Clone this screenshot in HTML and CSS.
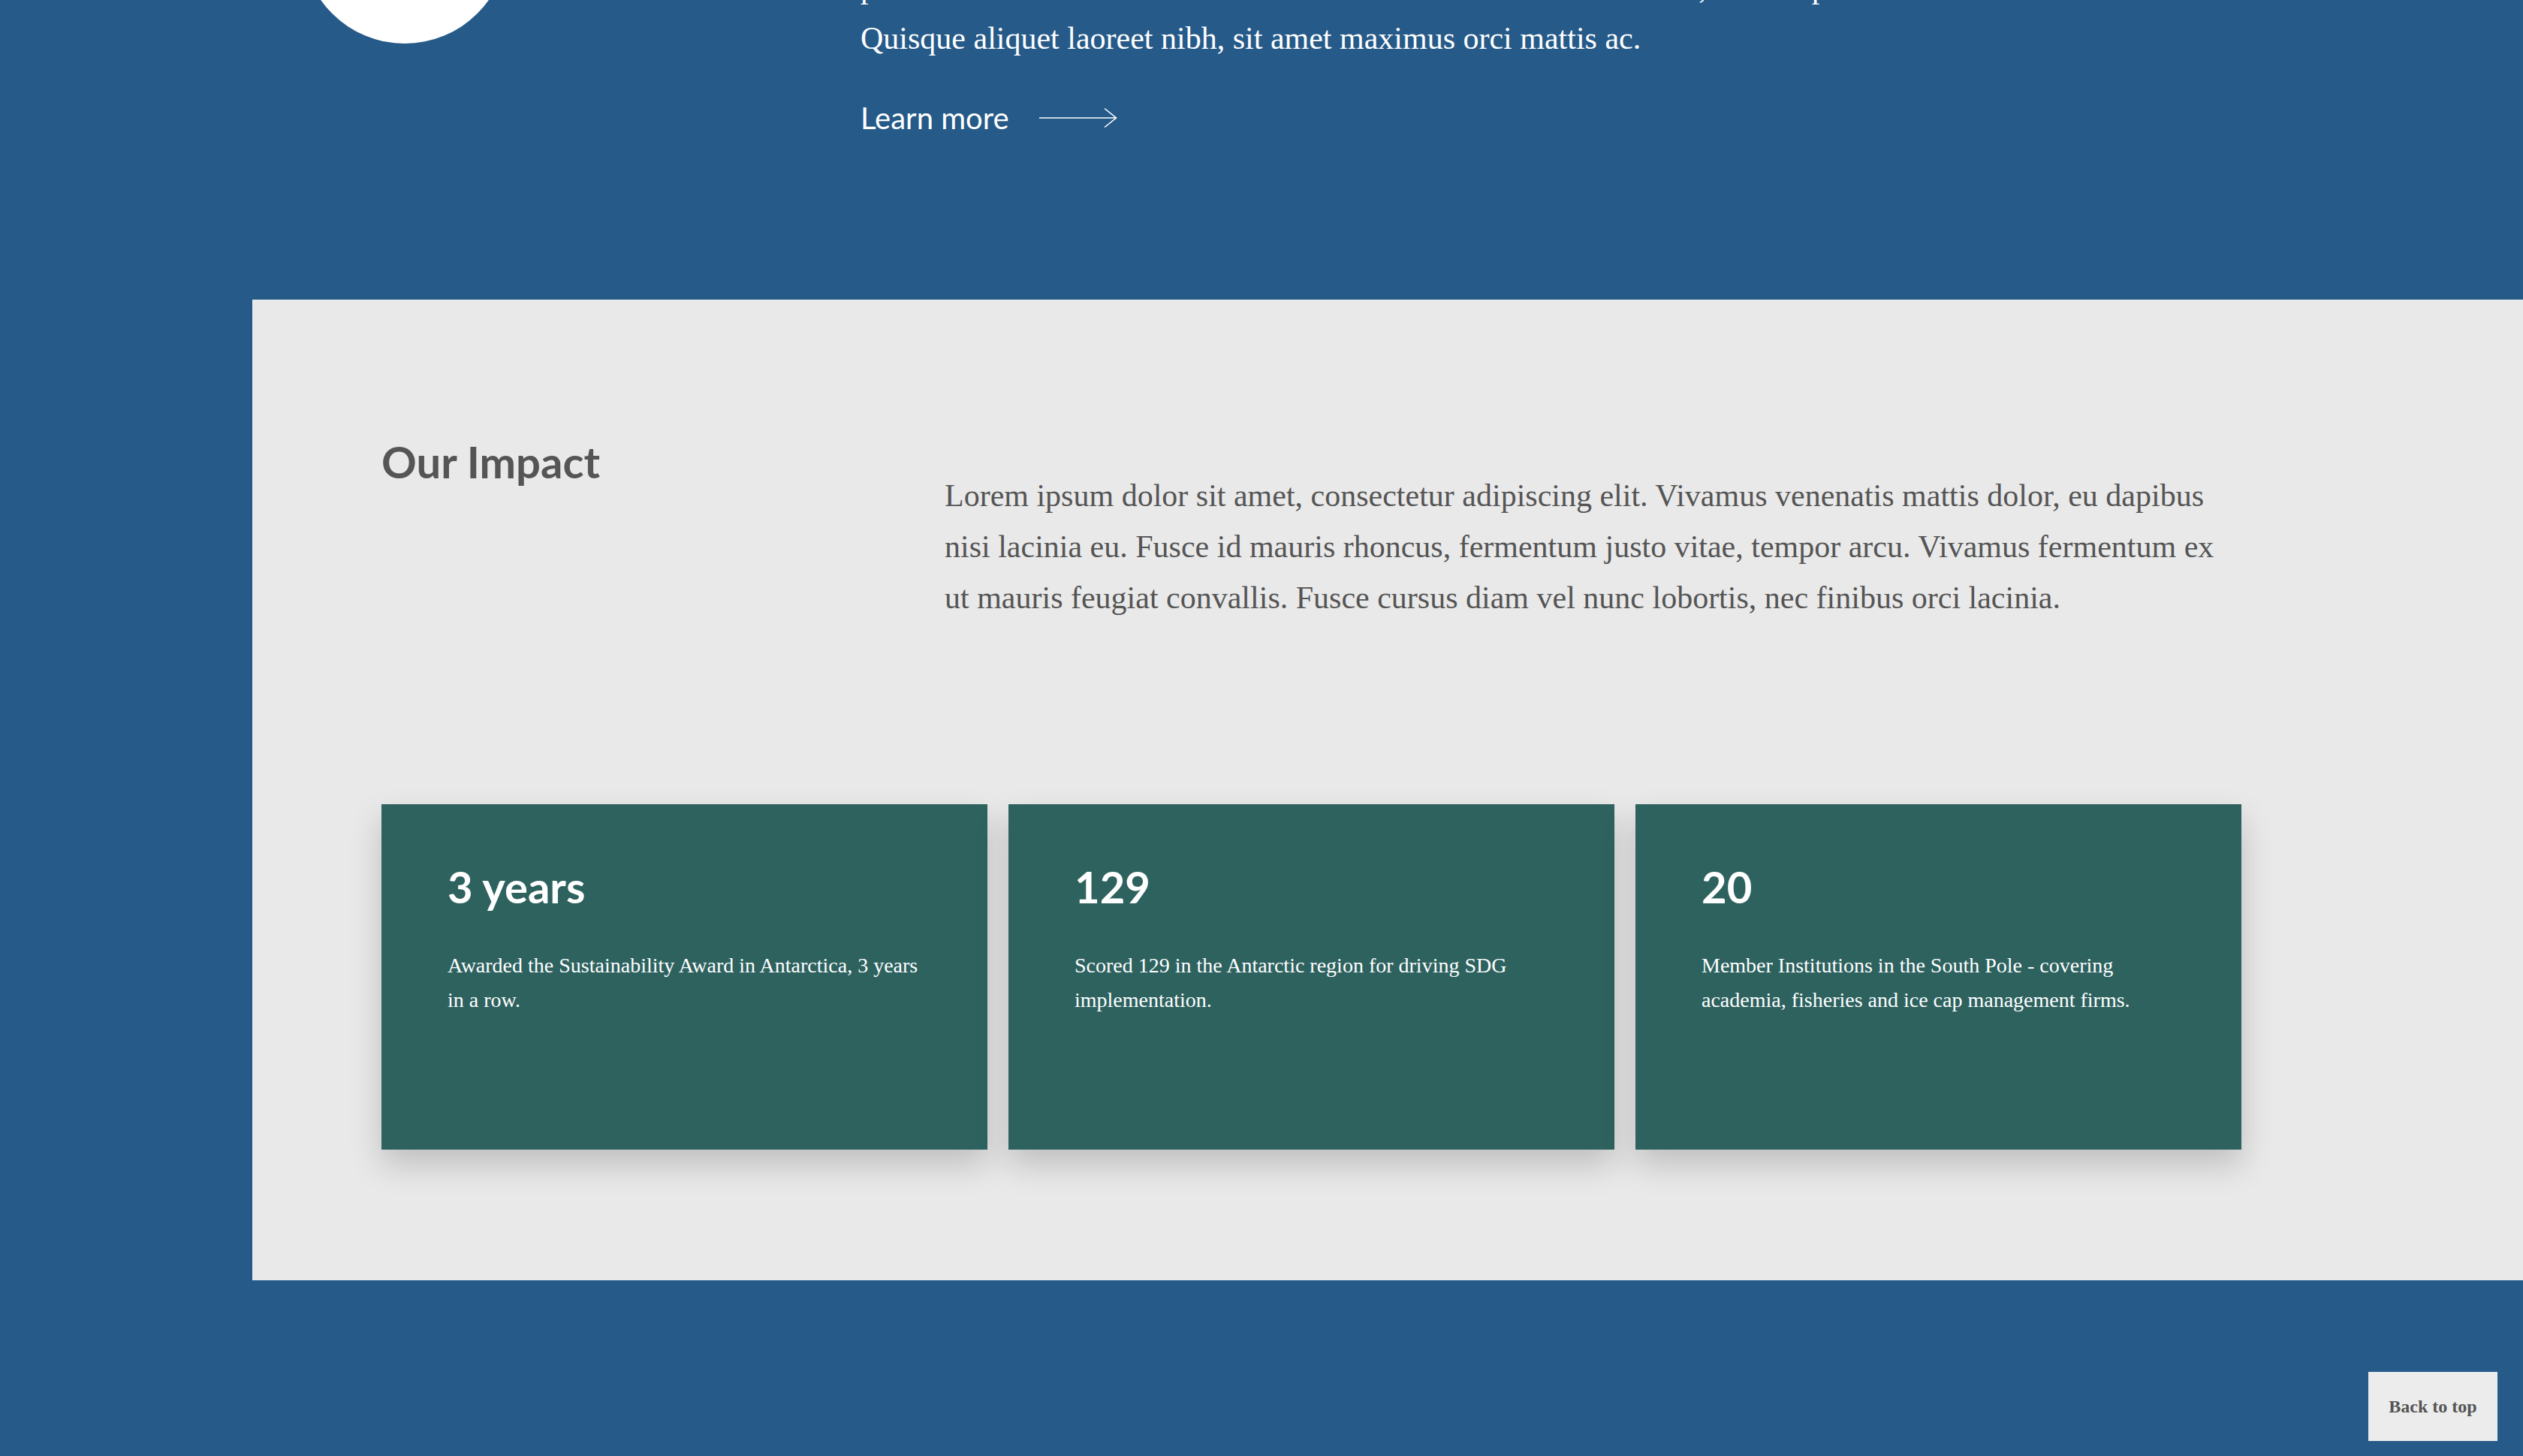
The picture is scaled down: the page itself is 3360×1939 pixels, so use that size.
FILE: index.html
```html
<!DOCTYPE html>
<html lang="en">
<head>
<meta charset="utf-8">
<title>Our Impact</title>
<link rel="stylesheet" href="styles.css">
</head>
<body>
<section class="hero">
  <div class="hero-circle"></div>
  <div class="hero-body">
    <p class="hero-text">pretium lacus. Nam libero ut erat sollicitudin dictum sit amet nunc, sed tempus<br>Quisque aliquet laoreet nibh, sit amet maximus orci mattis ac.</p>
    <a class="learn-more" href="#">
      <span>Learn more</span>
      <svg class="arrow" width="104" height="28" viewBox="0 0 104 28" aria-hidden="true">
        <line x1="0" y1="14" x2="102.5" y2="14" stroke="#fff" stroke-width="1.6"/>
        <polyline points="87,1.5 102.5,14 87,26.5" fill="none" stroke="#fff" stroke-width="1.6"/>
      </svg>
    </a>
  </div>
</section>

<section class="impact">
  <div class="impact-intro">
    <h2 class="impact-title">Our Impact</h2>
    <p class="impact-text">Lorem ipsum dolor sit amet, consectetur adipiscing elit. Vivamus venenatis mattis dolor, eu dapibus nisi lacinia eu. Fusce id mauris rhoncus, fermentum justo vitae, tempor arcu. Vivamus fermentum ex ut mauris feugiat convallis. Fusce cursus diam vel nunc lobortis, nec finibus orci lacinia.</p>
  </div>
  <div class="cards">
    <div class="card">
      <h3 class="card-title">3 years</h3>
      <p class="card-text">Awarded the Sustainability Award in Antarctica, 3 years in a row.</p>
    </div>
    <div class="card">
      <h3 class="card-title">129</h3>
      <p class="card-text">Scored 129 in the Antarctic region for driving SDG implementation.</p>
    </div>
    <div class="card">
      <h3 class="card-title">20</h3>
      <p class="card-text">Member Institutions in the South Pole - covering academia, fisheries and ice cap management firms.</p>
    </div>
  </div>
</section>

<a class="back-to-top" href="#">Back to top</a>
</body>
</html>
```

FILE: styles.css
```css
html, body {
  margin: 0;
  padding: 0;
  background: #265a89;
}

body {
  min-height: 100vh;
  font-family: "Liberation Serif", "Times New Roman", serif;
  overflow: hidden;
}

/* Hero tail */
.hero {
  display: flex;
  align-items: flex-start;
  margin-top: -216px;
  padding: 0 0 218px 402px;
}

.hero-circle {
  flex: none;
  width: 274px;
  height: 274px;
  border-radius: 50%;
  background: #ffffff;
}

.hero-body {
  margin-left: 470px;
  padding-top: 165px;
}

.hero-text {
  margin: 0;
  color: #ffffff;
  font-size: 42px;
  line-height: 68px;
  white-space: nowrap;
}

.learn-more {
  display: flex;
  align-items: center;
  gap: 40px;
  margin-top: 48px;
  color: #ffffff;
  text-decoration: none;
  font-family: Lato, "Liberation Sans", sans-serif;
  font-size: 40px;
  line-height: 48px;
}

.arrow {
  display: block;
}

/* Impact section */
.impact {
  margin-left: 336px;
  background: #e9e9e9;
  padding: 181px 375px 174px 172px;
}

.impact-intro {
  display: flex;
  align-items: flex-start;
}

.impact-title {
  flex: none;
  width: 750px;
  margin: 0;
  color: #555555;
  font-family: Lato, "Liberation Sans", sans-serif;
  font-weight: 700;
  font-size: 58px;
  line-height: 1.2;
}

.impact-text {
  flex: 1;
  margin: 46px 0 0;
  color: #555555;
  font-size: 42px;
  line-height: 68px;
}

.cards {
  display: grid;
  grid-template-columns: repeat(3, 1fr);
  gap: 28px;
  margin-top: 241px;
}

.card {
  height: 460px;
  box-sizing: border-box;
  padding: 75px 69px 0 88px;
  background: #2d625f;
  box-shadow: 0 20px 40px rgba(0, 0, 0, 0.18);
}

.card-title {
  margin: 0;
  color: #ffffff;
  font-family: Lato, "Liberation Sans", sans-serif;
  font-weight: 700;
  font-size: 58px;
  line-height: 1.2;
}

.card-text {
  margin: 47px 0 0;
  color: #ffffff;
  font-size: 28px;
  line-height: 46px;
}

/* Back to top */
.back-to-top {
  position: fixed;
  right: 34px;
  bottom: 20px;
  width: 172px;
  height: 92px;
  display: flex;
  align-items: center;
  justify-content: center;
  background: #ececec;
  color: #555555;
  text-decoration: none;
  font-weight: 700;
  font-size: 24px;
}
```
